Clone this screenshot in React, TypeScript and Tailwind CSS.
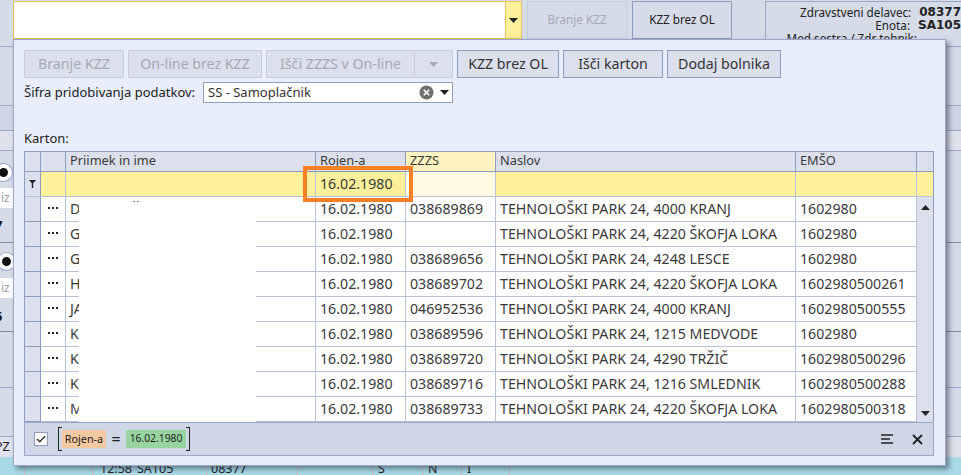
import React from 'react';

const rows = [
  { name: 'D', zzzs: '038689869', addr: 'TEHNOLOŠKI PARK 24, 4000 KRANJ', emso: '1602980' },
  { name: 'G', zzzs: '', addr: 'TEHNOLOŠKI PARK 24, 4220 ŠKOFJA LOKA', emso: '1602980' },
  { name: 'G', zzzs: '038689656', addr: 'TEHNOLOŠKI PARK 24, 4248 LESCE', emso: '1602980' },
  { name: 'H', zzzs: '038689702', addr: 'TEHNOLOŠKI PARK 24, 4220 ŠKOFJA LOKA', emso: '1602980500261' },
  { name: 'JA', zzzs: '046952536', addr: 'TEHNOLOŠKI PARK 24, 4000 KRANJ', emso: '1602980500555' },
  { name: 'K', zzzs: '038689596', addr: 'TEHNOLOŠKI PARK 24, 1215 MEDVODE', emso: '1602980' },
  { name: 'K', zzzs: '038689720', addr: 'TEHNOLOŠKI PARK 24, 4290 TRŽIČ', emso: '1602980500296' },
  { name: 'K', zzzs: '038689716', addr: 'TEHNOLOŠKI PARK 24, 1216 SMLEDNIK', emso: '1602980500288' },
  { name: 'M', zzzs: '038689733', addr: 'TEHNOLOŠKI PARK 24, 4220 ŠKOFJA LOKA', emso: '1602980500318' },
];

const Caret = ({ up = false, className = '' }: { up?: boolean; className?: string }) => (
  <svg width="9" height="5" viewBox="0 0 9 5" className={className}>
    <path d={up ? 'M0 5 L4.5 0 L9 5 Z' : 'M0 0 L9 0 L4.5 5 Z'} fill="currentColor" />
  </svg>
);

function ToolButton({ label, width, disabled }: { label: string; width: string; disabled?: boolean }) {
  return (
    <div
      className={`${width} h-[28px] flex items-center justify-center border bg-[#dce0ec] ${
        disabled ? 'border-[#c5cde0] text-[#a4a9b5]' : 'border-[#8e9cc0] text-[#333333]'
      }`}
    >
      {label}
    </div>
  );
}

export default function App() {
  return (
    <div
      className="relative w-[961px] h-[475px] overflow-hidden bg-[#d6dbe8] text-[#333333] text-[14.2px] flex flex-col"
      style={{ fontFamily: '"Noto Sans", "Open Sans", sans-serif' }}
    >
      {/* ozadje - glava */}
      <div className="h-[47px] shrink-0 flex pl-[13px] pt-px gap-[5px] border-b border-[#9aa7c7]">
        <div className="w-[509px] h-[38px] flex bg-white border border-[#e8c060]">
          <div className="flex-1" />
          <div className="w-[16px] bg-[#fdf09c] border-l border-[#e8c060] flex items-center justify-center text-[#222222]">
            <Caret />
          </div>
        </div>
        <div className="w-[100px] h-[38px] flex items-center justify-center text-[11.7px] border border-[#c5cde0] text-[#a4a9b5]">
          Branje KZZ
        </div>
        <div className="w-[100px] h-[38px] flex items-center justify-center text-[11.7px] border border-[#8e9cc0] text-[#222222]">
          KZZ brez OL
        </div>
        <div className="ml-[28px] flex-1 border-t border-l border-[#9aa7c7] text-[11.7px] leading-[13px] pt-[4px] text-[#222222] overflow-hidden whitespace-nowrap">
          <div className="flex">
            <span className="w-[151px] text-right">Zdravstveni delavec:</span>
            <b className="ml-[8px] text-[12px]" style={{ fontFamily: '"DejaVu Sans", sans-serif' }}>08377</b>
          </div>
          <div className="flex">
            <span className="w-[151px] text-right">Enota:</span>
            <b className="ml-[8px] text-[12px]" style={{ fontFamily: '"DejaVu Sans", sans-serif' }}>SA105</b>
          </div>
          <div className="flex">
            <span className="w-[151px] text-right">Med sestra / Zdr tehnik:</span>
          </div>
        </div>
      </div>
      <div className="h-[59px] shrink-0 border-b border-[#9aa7c7]" />
      <div className="h-[25px] shrink-0 border-b border-[#9aa7c7] bg-[#cfd5e4]" />
      <div className="h-[20px] shrink-0 border-b border-[#9aa7c7] bg-[#dfe2ec]" />

      {/* ozadje - levi stolpec */}
      <div className="h-[92px] shrink-0 border-b border-[#8a8f9c] flex flex-col pt-[13px]">
        <div className="w-[17px] h-[17px] -ml-[5px] rounded-full border-[4px] border-white bg-[#111111] shadow-[0_0_0_1px_#9aa7c7]" />
        <div className="w-[13px] h-[20px] mt-[7px] bg-white text-[12px] leading-[20px] pl-[1px] text-[#a0a0a0] overflow-hidden">iz</div>
        <div className="h-[15px] mt-[10px] -ml-[5px] text-[13px] leading-[15px] font-bold text-[#111111]">7</div>
      </div>
      <div className="h-[89px] shrink-0 border-b border-[#8a8f9c] flex flex-col pt-[10px]">
        <div className="w-[17px] h-[17px] -ml-[2px] rounded-full border-[4px] border-white bg-[#111111] shadow-[0_0_0_1px_#9aa7c7]" />
        <div className="w-[13px] h-[20px] mt-[8px] bg-white text-[12px] leading-[20px] pl-[1px] text-[#a0a0a0] overflow-hidden">iz</div>
        <div className="h-[15px] mt-[11px] -ml-[5px] text-[13px] leading-[15px] font-bold text-[#111111]">5</div>
      </div>
      <div className="h-[56px] shrink-0 border-b border-[#9aa7c7]" />
      <div className="h-[49px] shrink-0 border-b border-[#9aa7c7]" />
      <div className="h-[20px] shrink-0 bg-[#dfe2ec] text-[12.5px] leading-[20px] text-[#222222]">
        <div className="-ml-[5px]">PZ</div>
      </div>

      {/* ozadje - modra vrstica */}
      <div className="flex-1 bg-[#a9dbe6] text-[12.5px] leading-[20px] text-[#222222] grid grid-cols-[25px_68px_39px_75px_91px_75px_50px_39px_48px_1fr] pt-px">
        <div className="border-r border-[#cdbccb]" />
        <div className="border-r border-[#cdbccb]" />
        <div className="border-r border-[#cdbccb] pl-[7px] pt-[1px] whitespace-nowrap">12:58</div>
        <div className="border-r border-[#cdbccb] pl-[5px] pt-[1px]">SA105</div>
        <div className="border-r border-[#cdbccb] pl-[4px] pt-[1px]">08377</div>
        <div className="border-r border-[#cdbccb]" />
        <div className="border-r border-[#cdbccb] pl-[5px] pt-[1px]">S</div>
        <div className="border-r border-[#cdbccb] pl-[5px] pt-[1px]">N</div>
        <div className="border-r border-[#cdbccb] pl-[5px] pt-[1px]">I</div>
        <div />
      </div>

      {/* pojavno okno */}
      <div className="absolute left-[13px] top-[39px] w-[933px] h-[427px] bg-[#e8eefc] border border-[#9aa7c7] shadow-[3px_3px_5px_rgba(40,50,70,0.55)] pt-[10px] px-[10px]">
        <div className="flex gap-[4px]">
          <ToolButton label="Branje KZZ" width="w-[100px]" disabled />
          <ToolButton label="On-line brez KZZ" width="w-[134px]" disabled />
          <div className="w-[187px] h-[28px] flex border border-[#c5cde0] bg-[#dce0ec] text-[#a4a9b5]">
            <div className="w-[148px] flex items-center justify-center border-r border-[#c5cde0]">Išči ZZZS v On-line</div>
            <div className="flex-1 flex items-center justify-center">
              <Caret />
            </div>
          </div>
          <ToolButton label="KZZ brez OL" width="w-[102px]" />
          <ToolButton label="Išči karton" width="w-[100px]" />
          <ToolButton label="Dodaj bolnika" width="w-[114px]" />
        </div>

        <div className="flex items-center mt-[4px] h-[21px]">
          <span className="w-[179px] shrink-0 whitespace-nowrap text-[13px] text-[#222222]">Šifra pridobivanja podatkov:</span>
          <div className="w-[250px] h-[21px] bg-white border border-[#8e9cc0] flex items-center pl-[4px] text-[13px]">
            <span className="flex-1">SS - Samoplačnik</span>
            <svg width="15" height="15" viewBox="0 0 15 15" className="mr-[6px]">
              <circle cx="7.5" cy="7.5" r="7" fill="#6f6f6f" />
              <path d="M4.8 4.8 L10.2 10.2 M10.2 4.8 L4.8 10.2" stroke="#ffffff" strokeWidth="1.6" />
            </svg>
            <Caret className="mr-[3px] text-[#222222]" />
          </div>
        </div>

        <div className="mt-[27px] h-[21px] leading-[16px] text-[13px] text-[#222222]">Karton:</div>

        <div className="w-[910px] border-x border-t border-[#8e9cc0] text-[#3a3a3a]">
          <div className="grid grid-cols-[16px_25px_250px_90px_90px_300px_121px_16px] h-[20px] border-b border-[#8e9cc0] bg-[#dce0ec] text-[12.8px] leading-[16px]">
            <div className="border-r border-[#8e9cc0]" />
            <div className="border-r border-[#8e9cc0]" />
            <div className="border-r border-[#8e9cc0] pl-[4px]">Priimek in ime</div>
            <div className="border-r border-[#8e9cc0] pl-[4px]">Rojen-a</div>
            <div className="border-r border-[#8e9cc0] pl-[4px] bg-[#fdf3c0]">ZZZS</div>
            <div className="border-r border-[#8e9cc0] pl-[4px]">Naslov</div>
            <div className="border-r border-[#8e9cc0] pl-[4px]">EMŠO</div>
            <div />
          </div>
          <div className="grid grid-cols-[16px_25px_250px_90px_90px_300px_121px_16px] h-[25px] border-b border-[#b8c2d8] bg-[#fdf09c] leading-[23px]">
            <div className="border-r border-[#8e9cc0] bg-[#dce0ec] flex items-center justify-center">
              <svg width="7" height="8" viewBox="0 0 7 8">
                <path d="M0 0 H7 L4.2 3.2 V8 H2.8 V3.2 Z" fill="#222222" />
              </svg>
            </div>
            <div className="border-r border-[#b8c2d8]" />
            <div className="border-r border-[#b8c2d8]" />
            <div className="border-r border-[#b8c2d8] pl-[4px]">16.02.1980</div>
            <div className="border-r border-[#b8c2d8] bg-[#fffbe2]" />
            <div className="border-r border-[#b8c2d8]" />
            <div className="border-r border-[#b8c2d8]" />
            <div />
          </div>

          <div className="relative flex h-[225px]">
            <div className="w-[892px]">
              {rows.map((r, i) => (
                <div
                  key={i}
                  className="grid grid-cols-[16px_25px_250px_90px_90px_300px_121px] h-[25px] leading-[23px] whitespace-nowrap"
                >
                  <div className="border-r border-b border-[#8e9cc0] bg-[#dce0ec]" />
                  <div className="border-r border-b border-[#b8c2d8] bg-white flex items-center justify-center gap-[2px] pb-[2px]">
                    <span className="w-[2px] h-[2px] bg-[#222222]" />
                    <span className="w-[2px] h-[2px] bg-[#222222]" />
                    <span className="w-[2px] h-[2px] bg-[#222222]" />
                  </div>
                  <div className="border-r border-b border-[#b8c2d8] bg-white pl-[4px]">{r.name}</div>
                  <div className="border-r border-b border-[#b8c2d8] bg-white pl-[4px]">16.02.1980</div>
                  <div className="border-r border-b border-[#b8c2d8] bg-white pl-[4px]">{r.zzzs}</div>
                  <div className="border-r border-b border-[#b8c2d8] bg-white pl-[4px]">{r.addr}</div>
                  <div className="border-r border-b border-[#b8c2d8] bg-white pl-[4px]">{r.emso}</div>
                </div>
              ))}
            </div>
            <div className="w-[16px] bg-[#dce0ec] flex flex-col items-center justify-between pt-[8px] pb-[6px] text-[#222222]">
              <Caret up />
              <Caret />
            </div>
            {/* zakrita imena */}
            <div className="absolute left-[54px] top-[5px] w-[177px] bottom-0 bg-white" />
            <div className="absolute left-[108px] top-[4px] flex gap-[2px]">
              <span className="w-[2px] h-px bg-[#777777]" />
              <span className="w-[2px] h-px bg-[#777777]" />
            </div>
          </div>
        </div>

        <div className="w-[910px] h-[34px] border border-[#9aa7c7] bg-[#cfd6e6] flex items-center pl-[9px] pr-[10px] text-[#222222]">
          <div className="w-[14px] h-[14px] shrink-0 border border-[#8e9cc0] bg-white flex items-center justify-center">
            <svg width="10" height="8" viewBox="0 0 10 8">
              <path d="M1 4 L3.8 6.8 L9 1.2" fill="none" stroke="#333333" strokeWidth="1.4" />
            </svg>
          </div>
          <div className="ml-[10px] shrink-0 h-[24px] flex items-center border-x border-[#222222] relative">
            <span className="absolute left-0 top-0 w-[3px] h-px bg-[#222222]" />
            <span className="absolute left-0 bottom-0 w-[3px] h-px bg-[#222222]" />
            <span className="absolute right-0 top-0 w-[3px] h-px bg-[#222222]" />
            <span className="absolute right-0 bottom-0 w-[3px] h-px bg-[#222222]" />
            <div className="w-[44px] shrink-0 ml-[3px] h-[18px] bg-[#f4c8a0] flex items-center justify-center text-[10.8px] whitespace-nowrap">Rojen-a</div>
            <div className="w-[20px] shrink-0 text-center text-[16px] leading-[18px]">=</div>
            <div className="w-[60px] shrink-0 h-[18px] bg-[#98d4a0] flex items-center justify-center text-[10.3px] whitespace-nowrap">16.02.1980</div>
            <div className="w-[3px] shrink-0" />
          </div>
          <div className="flex-1" />
          <svg width="13" height="10" viewBox="0 0 13 10">
            <path d="M0 1 H12 M0 5 H9 M0 9 H12" stroke="#222222" strokeWidth="1.6" />
          </svg>
          <svg width="11" height="11" viewBox="0 0 11 11" className="ml-[18px]">
            <path d="M1 1 L10 10 M10 1 L1 10" stroke="#222222" strokeWidth="1.8" />
          </svg>
        </div>
      </div>

      {/* oranzni poudarek */}
      <div className="absolute left-[303px] top-[166px] w-[110px] h-[36px] border-[4px] border-[#fb7f25]" />
    </div>
  );
}
